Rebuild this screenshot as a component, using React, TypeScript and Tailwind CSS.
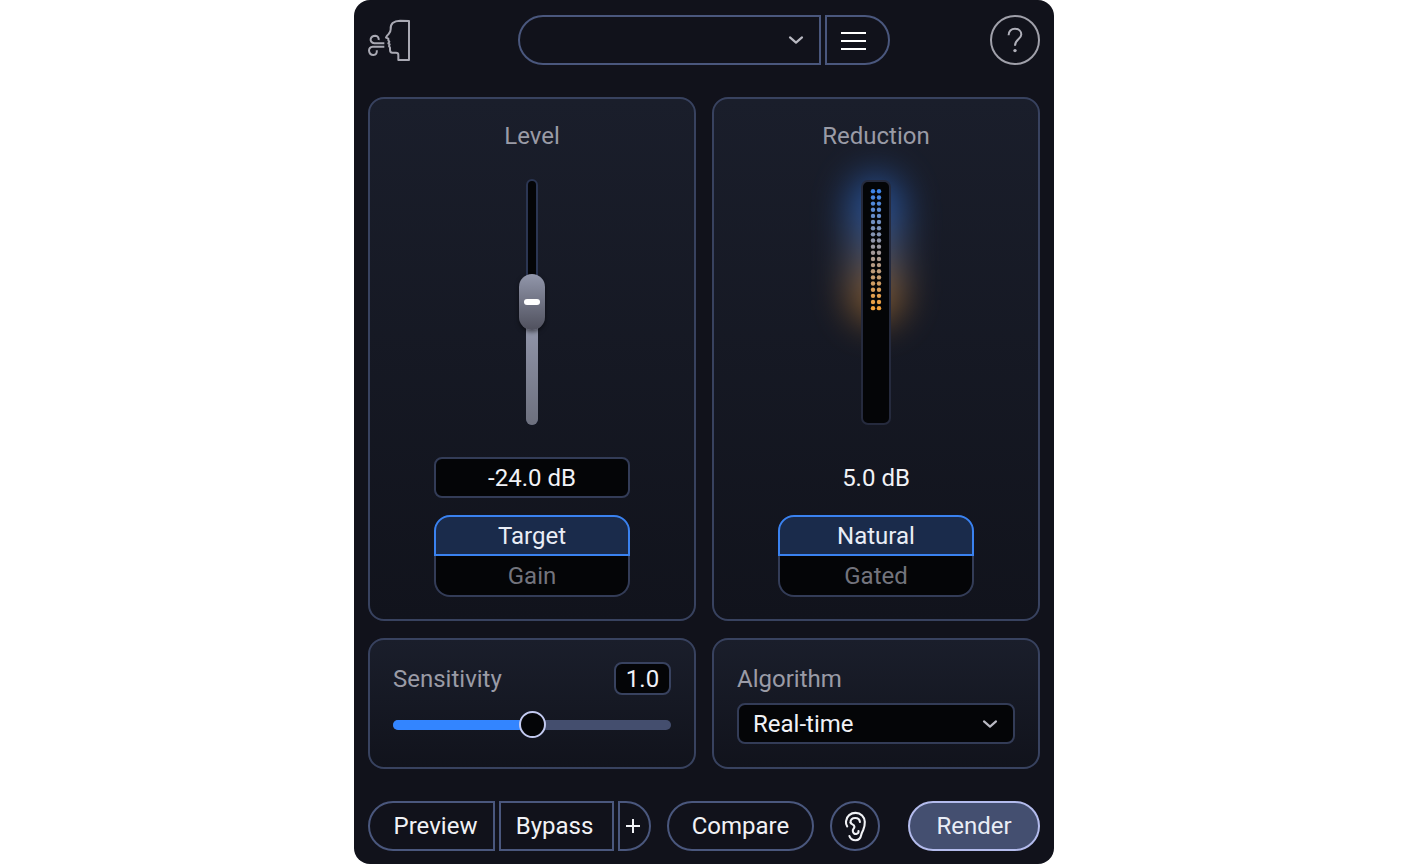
import { useState, type ReactNode } from 'react';

const METER_ROWS = 20;

const COLD = [61, 132, 232];
const MID = [158, 152, 158];
const WARM = [242, 160, 58];

function dotColor(row: number) {
  const t = row / (METER_ROWS - 1);
  const [from, to] = t < 0.5 ? [COLD, MID] : [MID, WARM];
  const k = t < 0.5 ? t * 2 : (t - 0.5) * 2;
  return `rgb(${from.map((c, i) => Math.round(c + (to[i] - c) * k)).join(',')})`;
}

function Logo() {
  return (
    <svg viewBox="54 54 132 132" className="w-11 h-11" fill="none" stroke="#a9a9b3" strokeWidth="6" aria-hidden="true">
      <path d="M177 63V180H145V164Q145 158 138 158H127Q120 158 120 150V143L117 138L119 133L115 130L118 125L115 121V116L108 113Q110 107 116 102Q122 96 122 88Q121 76 128 69Q136 62 150 62Z" strokeLinejoin="round" />
      <path d="M103 130H73C64 129 61 122 62 117C64 109 70 107 76 107C83 108 87 113 86 120" />
      <path d="M103 140H68C60 141 57 147 57 152C58 161 64 165 70 165C78 164 82 159 80 151" />
    </svg>
  );
}

function EarIcon() {
  return (
    <svg viewBox="0 1 50 50" className="w-[50px] h-[50px]" fill="none" stroke="#f1f2f6" strokeWidth="2.1" strokeLinecap="round" strokeLinejoin="round" aria-hidden="true">
      <path d="M17.2 26.4C16.2 25 15.8 23.2 16 21.3C16.5 16 20.7 12.9 25.6 12.9C30.8 12.9 34.6 16.6 34.8 21.8C34.9 24.6 34.3 27.4 33.2 30C32.2 32.2 31.6 33 31.2 35C30.6 38 28.4 40.2 25.6 40.2C22.4 40.2 20.2 38.6 19.4 36" />
      <path d="M20.6 22.5C20.1 19.6 22.2 18 25.2 18C28 18 29.7 19.6 29.9 22" />
      <path d="M20.6 22.5C21 24.8 24.2 24 24.4 26.6C24.6 28.5 22.6 29 22.8 31C23 33 24.5 34.2 26.4 33.9C28 33.6 28.7 32.4 28.5 31" />
    </svg>
  );
}

function Chevron() {
  return (
    <svg viewBox="0 0 16 10" className="pointer-events-none absolute right-[17px] top-1/2 -translate-y-1/2 w-4 h-[10px]" fill="none" stroke="#b9b9c2" strokeWidth="2.2" strokeLinecap="round" strokeLinejoin="round" aria-hidden="true">
      <path d="M2 2.4L8 7.6L14 2.4" />
    </svg>
  );
}

function Card({ children, className = '' }: { children: ReactNode; className?: string }) {
  return (
    <section className={`rounded-2xl border-2 border-[#38425f] bg-linear-to-b from-[#1a1e2b] to-[#11131c] px-[23px] ${className}`}>
      {children}
    </section>
  );
}

interface ToggleProps {
  label: string;
  options: string[];
  value: string;
  onChange: (value: string) => void;
}

function Toggle({ label, options, value, onChange }: ToggleProps) {
  return (
    <div role="group" aria-label={label} className="mt-[17px] w-[196px] flex flex-col">
      {options.map((option) => (
        <button
          key={option}
          type="button"
          aria-pressed={option === value}
          onClick={() => onChange(option)}
          className={`
            h-[41px] border-2 leading-7 first:rounded-t-2xl last:rounded-b-2xl
            ${option === value
              ? 'border-[#3a82f0] bg-[#1a2b4b] text-[#e9edf6]'
              : 'border-[#333c57] bg-[#040507] text-[#73747d] first:border-b-0 last:border-t-0'
            }
          `}
        >
          {option}
        </button>
      ))}
    </div>
  );
}

function LevelFader({ value, onChange }: { value: number; onChange: (value: number) => void }) {
  const percent = ((value + 48) / 48) * 100;

  return (
    <div className="relative mt-7 h-[246px] w-[26px] flex justify-center">
      <div className="h-full w-3 rounded-full border-2 border-[#2b3653] bg-[#040507]" />
      <div
        className="absolute bottom-0 w-3 rounded-b-full bg-linear-to-b from-[#9a9fb5] to-[#6d707e]"
        style={{ height: `${percent}%` }}
      />
      <input
        type="range"
        aria-label="Level"
        min={-48}
        max={0}
        step={0.1}
        value={value}
        onChange={(e) => onChange(Number(e.target.value))}
        className="absolute inset-0 h-full w-full appearance-none bg-transparent [writing-mode:vertical-lr] [direction:rtl] outline-none [&::-webkit-slider-thumb]:appearance-none [&::-webkit-slider-thumb]:w-[26px] [&::-webkit-slider-thumb]:h-14 [&::-webkit-slider-thumb]:rounded-full [&::-webkit-slider-thumb]:bg-linear-to-b [&::-webkit-slider-thumb]:from-[#9297ab] [&::-webkit-slider-thumb]:to-[#50515e] [&::-webkit-slider-thumb]:shadow-[0_2px_4px_rgba(0,0,0,0.5)]"
      />
      {/* Grip mark, travels with the thumb */}
      <div
        className="pointer-events-none absolute w-4 h-[6px] rounded-full bg-white"
        style={{ bottom: `calc(25px + (100% - 56px) * ${percent / 100})` }}
      />
    </div>
  );
}

function ReductionMeter() {
  return (
    <div className="relative mt-7 h-[246px] w-[30px]">
      {/* Glow */}
      <div className="absolute -inset-x-3 -top-1 h-[148px] rounded-full bg-linear-to-b from-[#2c67c4] from-25% via-[#5f6478] via-55% to-[#b4762f] to-80% opacity-70 blur-[18px]" />
      <svg viewBox="0 0 30 246" className="relative block w-full h-full" role="img" aria-label="Reduction meter">
        <rect x="1" y="2" width="28" height="243" rx="6" fill="#040507" stroke="#252a3d" strokeWidth="2" />
        {Array.from({ length: METER_ROWS }, (_, row) => (
          <g key={row} fill={dotColor(row)}>
            <circle cx="12" cy={12.3 + row * 6.15} r="2.2" />
            <circle cx="18" cy={12.3 + row * 6.15} r="2.2" />
          </g>
        ))}
      </svg>
    </div>
  );
}

const outlineButton = 'h-[50px] border-2 border-[#4a577d] text-[#f1f2f6] flex items-center justify-center';

export default function App() {
  const [level, setLevel] = useState(-24);
  const [levelMode, setLevelMode] = useState('Target');
  const [reductionMode, setReductionMode] = useState('Natural');
  const [sensitivity, setSensitivity] = useState(1);

  const sensitivityPercent = (sensitivity / 2) * 100;

  return (
    <div className="bg-white font-[Roboto,sans-serif] text-2xl leading-[30px]">
      <main className="mx-auto w-full max-w-[700px] rounded-2xl bg-[#11121b] px-[14px] pt-[15px] pb-[13px]">
        {/* Header */}
        <header className="grid grid-cols-[1fr_auto_1fr] items-center">
          <Logo />
          <div className="flex gap-1">
            <div className="relative">
              <select aria-label="Preset" className="block h-[50px] w-[303px] appearance-none rounded-l-full border-2 border-[#4a577d] bg-transparent pl-6 pr-10 text-[#f1f2f6]">
                <option value=""></option>
              </select>
              <Chevron />
            </div>
            <button type="button" aria-label="Menu" className={`${outlineButton} w-[65px] rounded-r-full pr-2`}>
              <svg viewBox="0 0 26 20" className="w-[26px] h-5" stroke="#fff" strokeWidth="2" aria-hidden="true">
                <path d="M0 3H25M0 11H25M0 19H25" />
              </svg>
            </button>
          </div>
          <button type="button" aria-label="Help" className="justify-self-end flex h-[50px] w-[50px] items-center justify-center rounded-full border-2 border-[#a0a0aa]">
            <svg viewBox="0 0 16 26" className="w-4 h-[26px]" fill="none" stroke="#b0b0ba" strokeWidth="2" aria-hidden="true">
              <path d="M1.6 8.2C1.6 4.2 4.2 1.8 8 1.8C11.8 1.8 14.3 4.2 14.3 7.6C14.3 12.2 8 12 8 18.8" />
              <circle cx="8" cy="23.6" r="1.7" fill="#b0b0ba" stroke="none" />
            </svg>
          </button>
        </header>

        {/* Panels */}
        <div className="mt-8 grid grid-cols-2 gap-x-4 gap-y-[17px]">
          <Card className="flex flex-col items-center pt-[22px] pb-[22px]">
            <h2 className="text-[#9a9ba6]">Level</h2>
            <LevelFader value={level} onChange={setLevel} />
            <output className="mt-8 flex h-[41px] w-[196px] items-center justify-center rounded-lg border-2 border-[#333c57] bg-[#040507] text-[#f1f2f6]">
              {level.toFixed(1)} dB
            </output>
            <Toggle label="Level mode" options={['Target', 'Gain']} value={levelMode} onChange={setLevelMode} />
          </Card>

          <Card className="flex flex-col items-center pt-[22px] pb-[22px]">
            <h2 className="text-[#9a9ba6]">Reduction</h2>
            <ReductionMeter />
            <output className="mt-8 flex h-[41px] items-center text-[#f1f2f6]">5.0 dB</output>
            <Toggle label="Reduction mode" options={['Natural', 'Gated']} value={reductionMode} onChange={setReductionMode} />
          </Card>

          <Card className="pt-[22px] pb-[23px]">
            <div className="flex h-[33px] items-center justify-between">
              <label htmlFor="sensitivity" className="text-[#9a9ba6]">Sensitivity</label>
              <output htmlFor="sensitivity" className="flex h-[33px] w-[57px] items-center justify-center rounded-lg border-2 border-[#38425f] bg-[#040507] text-[#f1f2f6]">
                {sensitivity.toFixed(1)}
              </output>
            </div>
            <div className="relative mt-4 flex h-[27px] items-center">
              <div className="h-[10px] w-full overflow-hidden rounded-full bg-[#444e6e]">
                <div className="h-full bg-[#3385ff]" style={{ width: `${sensitivityPercent}%` }} />
              </div>
              <input
                id="sensitivity"
                type="range"
                min={0}
                max={2}
                step={0.1}
                value={sensitivity}
                onChange={(e) => setSensitivity(Number(e.target.value))}
                className="absolute inset-0 h-full w-full appearance-none bg-transparent outline-none [&::-webkit-slider-thumb]:appearance-none [&::-webkit-slider-thumb]:w-[27px] [&::-webkit-slider-thumb]:h-[27px] [&::-webkit-slider-thumb]:rounded-full [&::-webkit-slider-thumb]:border-2 [&::-webkit-slider-thumb]:border-[#c3caf0] [&::-webkit-slider-thumb]:bg-[#040507]"
              />
            </div>
          </Card>

          <Card className="pt-[22px] pb-[23px]">
            <label htmlFor="algorithm" className="flex h-[33px] items-center text-[#9a9ba6]">Algorithm</label>
            <div className="relative mt-2">
              <select id="algorithm" className="block h-[41px] w-full appearance-none rounded-lg border-2 border-[#333c57] bg-[#040507] pl-[14px] pr-10 leading-7 text-[#f1f2f6]">
                <option>Real-time</option>
                <option>Offline</option>
              </select>
              <Chevron />
            </div>
          </Card>
        </div>

        {/* Footer */}
        <footer className="mt-8 flex">
          <div className="flex gap-1">
            <button type="button" className={`${outlineButton} w-[127px] rounded-l-full pl-2`}>Preview</button>
            <button type="button" className={`${outlineButton} w-[115px] pr-1`}>Bypass</button>
            <button type="button" aria-label="Add" className={`${outlineButton} w-[33px] rounded-r-full pr-1`}>
              <svg viewBox="0 0 14 14" className="w-[14px] h-[14px]" stroke="#f1f2f6" strokeWidth="2" aria-hidden="true">
                <path d="M7 0V14M0 7H14" />
              </svg>
            </button>
          </div>
          <button type="button" className={`${outlineButton} ml-4 w-[147px] rounded-full`}>Compare</button>
          <button type="button" aria-label="Listen" className={`${outlineButton} ml-4 w-[50px] shrink-0 rounded-full`}>
            <span className="shrink-0"><EarIcon /></span>
          </button>
          <button type="button" className="ml-auto flex h-[50px] w-[132px] items-center justify-center rounded-full border-2 border-[#b3bbec] bg-[#444f70] text-[#e9edf6]">
            Render
          </button>
        </footer>
      </main>
    </div>
  );
}
